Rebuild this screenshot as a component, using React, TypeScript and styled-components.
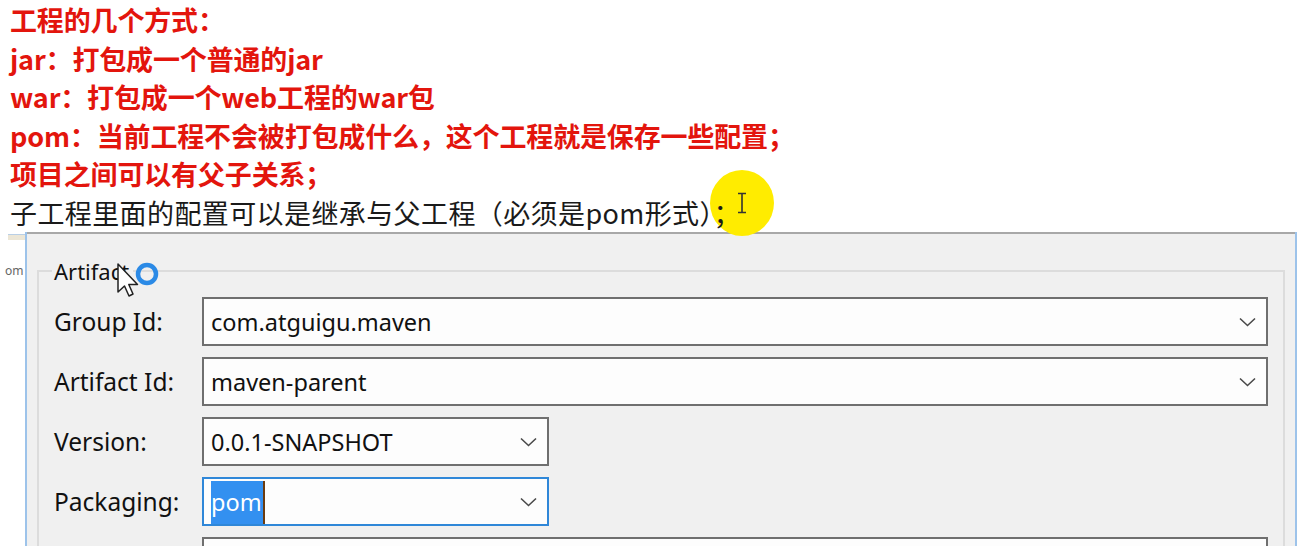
import React from "react";
import styled, { createGlobalStyle } from "styled-components";

const GlobalStyle = createGlobalStyle`
  html, body {
    margin: 0;
    padding: 0;
    background: #ffffff;
    overflow: hidden;
  }
  body {
    width: 1299px;
    height: 546px;
  }
`;

const Page = styled.div`
  position: relative;
  width: 1299px;
  height: 546px;
  overflow: hidden;
  background: #ffffff;
`;

const Notes = styled.div`
  position: relative;
  z-index: 1;
  padding: 1px 0 0 10px;
  height: 232px;
  box-sizing: border-box;
  font-family: "Noto Sans CJK SC", "Noto Sans", sans-serif;
  font-size: 27px;
  line-height: 38.5px;
`;

const NoteLine = styled.div<{ $strong?: boolean }>`
  white-space: nowrap;
  color: ${(p) => (p.$strong ? "#e3150d" : "#1a1a1a")};
  font-weight: ${(p) => (p.$strong ? 700 : 400)};
  letter-spacing: ${(p) => (p.$strong ? "-0.15px" : "0.4px")};
`;

const Spotlight = styled.div`
  position: absolute;
  z-index: 0;
  left: 710px;
  top: 170px;
  width: 64px;
  height: 66px;
  border-radius: 50%;
  background: #ffec00;
  display: flex;
  align-items: center;
  justify-content: center;
`;

const Workspace = styled.div`
  display: flex;
  height: 314px;
`;

const BackWindow = styled.div`
  width: 25px;
  flex: none;
  display: flex;
  flex-direction: column;
  background: #ffffff;
`;

const BackBar = styled.div`
  margin: 2px 0 0 8px;
  height: 5px;
  background: #ece6d6;
  border-top: 1px solid #b9cfe6;
`;

const BackText = styled.div`
  margin: 23px 0 0 5px;
  font-family: "Noto Sans", sans-serif;
  font-size: 12px;
  line-height: 16px;
  color: #666;
  white-space: nowrap;
`;

const Dialog = styled.div`
  width: 1268px;
  flex: none;
  border-left: 2px solid #9dc3ea;
  border-right: 2px solid #9dc3ea;
  display: flex;
  flex-direction: column;
`;

const DialogTop = styled.div`
  height: 4px;
  background: #ffffff;
  border-bottom: 2px solid #a8a8a8;
`;

const DialogBody = styled.div`
  flex: 1;
  background: #f0f0f0;
  padding: 25px 10px 0 10px;
`;

const GroupBox = styled.fieldset`
  margin: 0;
  padding: 14px 13px 0 15px;
  border: 2px solid #dcdcdc;
  border-bottom: none;
  height: 300px;
  box-sizing: border-box;
  display: flex;
  flex-direction: column;
  gap: 11px;
  min-width: 0;
`;

const Legend = styled.legend`
  margin-left: -2px;
  padding: 0 4px 0 2px;
  font-family: "Noto Sans", sans-serif;
  font-size: 22px;
  color: #111;
  line-height: 24px;
`;

const Row = styled.div`
  display: flex;
  align-items: center;
`;

const Label = styled.div`
  width: 148px;
  flex: none;
  font-family: "Noto Sans", sans-serif;
  font-size: 24.5px;
  color: #111;
`;

const Combo = styled.div<{ $narrow?: boolean; $focused?: boolean }>`
  position: relative;
  width: ${(p) => (p.$narrow ? "347px" : "1066px")};
  height: 49px;
  box-sizing: border-box;
  border: 2px solid ${(p) => (p.$focused ? "#2f87d8" : "#6f6f6f")};
  background: #fdfdfd;
  display: flex;
  align-items: center;
  padding: 0 10px 0 7px;
  font-family: "Noto Sans", sans-serif;
  font-size: 23.5px;
  color: #111;
`;

const ComboText = styled.span`
  flex: 1;
  white-space: nowrap;
`;

const Selected = styled.span`
  background: #3390f0;
  color: #ffffff;
  padding: 5px 1px 6px 0;
  border-right: 2px solid #6b3c10;
`;

const Chevron = () => (
  <svg width="17" height="10" viewBox="0 0 17 10" fill="none">
    <path d="M1 1.5 L8.5 8.5 L16 1.5" stroke="#4a4a4a" strokeWidth="1.6" />
  </svg>
);

const IBeam = () => (
  <svg width="12" height="22" viewBox="0 0 12 22" fill="none">
    <path d="M2 1.5 H10 M6 1.5 V20.5 M2 20.5 H10" stroke="#333" strokeWidth="1.6" />
  </svg>
);

const Pointer = styled.div`
  position: absolute;
  left: 116px;
  top: 262px;
  width: 48px;
  height: 44px;
`;

const rows: { label: string; value: string; narrow?: boolean; focused?: boolean }[] = [
  { label: "Group Id:", value: "com.atguigu.maven" },
  { label: "Artifact Id:", value: "maven-parent" },
  { label: "Version:", value: "0.0.1-SNAPSHOT", narrow: true },
  { label: "Packaging:", value: "pom", narrow: true, focused: true },
  { label: "", value: "" },
];

export default function App() {
  return (
    <Page>
      <GlobalStyle />
      <Spotlight>
        <IBeam />
      </Spotlight>
      <Notes>
        <NoteLine $strong>工程的几个方式：</NoteLine>
        <NoteLine $strong>jar：打包成一个普通的jar</NoteLine>
        <NoteLine $strong>war：打包成一个web工程的war包</NoteLine>
        <NoteLine $strong>pom：当前工程不会被打包成什么，这个工程就是保存一些配置；</NoteLine>
        <NoteLine $strong>项目之间可以有父子关系；</NoteLine>
        <NoteLine>子工程里面的配置可以是继承与父工程（必须是pom形式）；</NoteLine>
      </Notes>
      <Workspace>
        <BackWindow>
          <BackBar />
          <BackText>om</BackText>
        </BackWindow>
        <Dialog>
          <DialogTop />
          <DialogBody>
            <GroupBox>
              <Legend>Artifact</Legend>
              {rows.map((r, i) => (
                <Row key={i}>
                  <Label>{r.label}</Label>
                  <Combo $narrow={r.narrow} $focused={r.focused}>
                    <ComboText>
                      {r.focused ? <Selected>{r.value}</Selected> : r.value}
                    </ComboText>
                    <Chevron />
                  </Combo>
                </Row>
              ))}
            </GroupBox>
          </DialogBody>
        </Dialog>
      </Workspace>
      <Pointer>
        <svg width="48" height="44" viewBox="0 0 48 44" fill="none">
          <path
            d="M2 2 L2 30 L8.5 24 L13 34 L17 32 L12.8 22.5 L21.5 22.5 Z"
            fill="#ffffff"
            stroke="#222"
            strokeWidth="1.5"
            strokeLinejoin="round"
          />
          <circle cx="31" cy="12" r="9" stroke="#2b8ae6" strokeWidth="4.5" />
        </svg>
      </Pointer>
    </Page>
  );
}
